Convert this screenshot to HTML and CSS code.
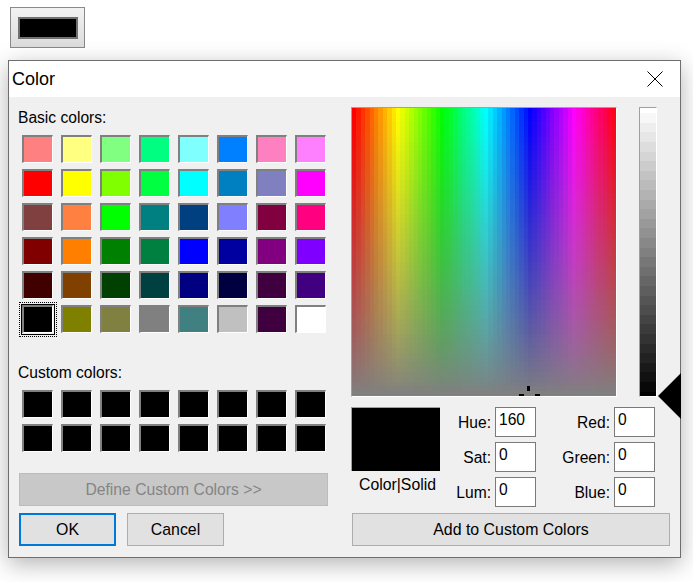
FILE: index.html
```html
<!DOCTYPE html>
<html lang="en">
<head>
    <meta charset="UTF-8">
    <meta name="viewport" content="width=device-width, initial-scale=1.0">
    <title>Color</title>
    <link rel="stylesheet" href="styles.css">
</head>
<body>

    <button class="color-button"><span class="color-button-fill"></span></button>

    <div class="dialog">
        <div class="title-bar">
            <span class="title">Color</span>
            <svg class="close-icon" width="16" height="16" viewBox="0 0 16 16">
                <path d="M0.5 0.5L15.5 15.5M15.5 0.5L0.5 15.5" stroke="#000" stroke-width="1" fill="none"/>
            </svg>
        </div>

        <div class="dialog-body">

            <!-- Left side: swatches and buttons -->
            <div class="left-column">
                <div class="group-label">Basic colors:</div>
                <div class="swatches" id="basic-colors"></div>

                <div class="group-label custom-label">Custom colors:</div>
                <div class="swatches" id="custom-colors"></div>

                <button class="win-button define-button">Define Custom Colors &gt;&gt;</button>
                <div class="button-row">
                    <button class="win-button ok-button">OK</button>
                    <button class="win-button cancel-button">Cancel</button>
                </div>
            </div>

            <!-- Right side: spectrum and values -->
            <div class="right-column">
                <div class="picker-row">
                    <div class="spectrum">
                        <canvas id="spectrum-canvas" width="264" height="288"></canvas>
                        <span class="cross cross-top"></span>
                        <span class="cross cross-left"></span>
                        <span class="cross cross-right"></span>
                    </div>
                    <div class="lum-bar">
                        <canvas id="lum-canvas" width="16" height="288"></canvas>
                    </div>
                    <svg class="lum-arrow" width="23" height="46" viewBox="0 0 23 46">
                        <polygon points="0,23 23,0 23,46" fill="#000"/>
                    </svg>
                </div>

                <div class="values-row">
                    <div class="preview-box">
                        <div class="preview"></div>
                        <div class="preview-label">Color|Solid</div>
                    </div>
                    <div class="fields">
                        <label>Hue:</label><div class="field">160</div>
                        <label>Red:</label><div class="field">0</div>
                        <label>Sat:</label><div class="field">0</div>
                        <label>Green:</label><div class="field">0</div>
                        <label>Lum:</label><div class="field">0</div>
                        <label>Blue:</label><div class="field">0</div>
                    </div>
                </div>

                <button class="win-button add-button">Add to Custom Colors</button>
            </div>

        </div>
    </div>

    <script src="script.js"></script>
</body>
</html>
```

FILE: styles.css
```css
html {
    height: 100%;
    background-color: #fff;
}

body {
    font-family: 'Liberation Sans', Arial, sans-serif;
    margin: 0;
    min-height: 582px;
    overflow: hidden;
    background-color: #fff;
    color: #000;
    font-size: 15.6px;
}

.color-button {
    display: block;
    box-sizing: border-box;
    width: 75px;
    height: 41px;
    margin: 7px 0 0 10px;
    padding: 0;
    border: 1px solid #8a8a8a;
    background: linear-gradient(#f2f2f2, #dcdcdc);
}

.color-button-fill {
    display: block;
    box-sizing: border-box;
    width: 60px;
    height: 22px;
    margin: 0 auto;
    background-color: #000;
    border: 2px solid #707070;
}

.dialog {
    box-sizing: border-box;
    width: 673px;
    height: 498px;
    margin: 12px 0 0 8px;
    background-color: #f0f0f0;
    border: 1px solid #6e6e6e;
    box-shadow: 0 6px 22px rgba(0, 0, 0, 0.3);
}

.title-bar {
    display: flex;
    align-items: center;
    justify-content: space-between;
    height: 36px;
    padding: 0 17px 0 3px;
    background-color: #fff;
}

.title {
    padding-top: 1px;
    font-size: 18px;
}

.close-icon {
    display: block;
}

.dialog-body {
    display: flex;
    gap: 23px;
    padding: 10px 0 0 9px;
}

.left-column {
    width: 310px;
}

.group-label {
    height: 28px;
    line-height: 22px;
}

.custom-label {
    margin-top: 27px;
    height: 30px;
    line-height: 26px;
}

.swatches {
    display: grid;
    grid-template-columns: repeat(8, 31px);
    column-gap: 8px;
    row-gap: 6px;
    margin-left: 4px;
}

.swatch {
    position: relative;
    box-sizing: border-box;
    height: 28px;
    border-style: solid;
    border-width: 2px 1px 1px 2px;
    border-color: #808080 #fff #fff #808080;
}

.swatch.selected::before {
    content: "";
    position: absolute;
    top: -3px;
    left: -3px;
    right: -3px;
    bottom: -3px;
    border: 1px solid #000;
}

.swatch.selected::after {
    content: "";
    position: absolute;
    top: -5px;
    left: -5px;
    right: -5px;
    bottom: -5px;
    border: 1px dotted #000;
}

.win-button {
    box-sizing: border-box;
    height: 33px;
    padding: 0;
    border: 1px solid #adadad;
    background-color: #e1e1e1;
    color: #000;
    font-family: inherit;
    font-size: 15.9px;
}

.define-button {
    display: block;
    width: 309px;
    margin: 21px 0 0 1px;
    background-color: #c8c8c8;
    border-color: #bcbcbc;
    color: #858585;
    font-size: 15.7px;
}

.button-row {
    display: flex;
    gap: 11px;
    margin: 7px 0 0 1px;
}

.ok-button,
.cancel-button {
    width: 97px;
}

.ok-button {
    border: 2px solid #0078d7;
}

.picker-row {
    display: flex;
    gap: 22px;
    position: relative;
}

.spectrum {
    position: relative;
    width: 264px;
    height: 288px;
    border-style: solid;
    border-width: 1px;
    border-color: #a0a0a0 #fff #fff #a0a0a0;
}

.spectrum canvas,
.lum-bar canvas {
    display: block;
}

.cross {
    position: absolute;
    background-color: #000;
}

.cross-top {
    left: 175px;
    top: 278px;
    width: 3px;
    height: 5px;
}

.cross-left {
    left: 167px;
    top: 286px;
    width: 5px;
    height: 2px;
}

.cross-right {
    left: 183px;
    top: 286px;
    width: 5px;
    height: 2px;
}

.lum-bar {
    width: 16px;
    height: 288px;
    border-style: solid;
    border-width: 1px;
    border-color: #a0a0a0 #fff #fff #a0a0a0;
}

.lum-arrow {
    position: absolute;
    left: 307px;
    top: 266px;
}

.values-row {
    display: flex;
    margin-top: 10px;
}

.preview-box {
    width: 89px;
}

.preview {
    box-sizing: border-box;
    height: 64px;
    background-color: #000;
    border-top: 1px solid #a0a0a0;
    border-left: 1px solid #a0a0a0;
}

.preview-label {
    margin-top: 5px;
    padding-left: 4px;
    font-size: 15.8px;
    line-height: 18px;
    text-align: center;
    white-space: nowrap;
}

.fields {
    display: grid;
    grid-template-columns: 51px 41px 70px 41px;
    grid-auto-rows: 30px;
    column-gap: 4px;
    row-gap: 5px;
}

.fields label {
    line-height: 31px;
    text-align: right;
}

.field {
    box-sizing: border-box;
    padding: 2px 0 0 3px;
    border: 1px solid #7a7a7a;
    background-color: #fff;
    line-height: 20px;
}

.add-button {
    display: block;
    width: 318px;
    margin: 6px 0 0 1px;
}
```

FILE: script.js
```js
const basicColors = [
    '#ff8080', '#ffff80', '#80ff80', '#00ff80', '#80ffff', '#0080ff', '#ff80c0', '#ff80ff',
    '#ff0000', '#ffff00', '#80ff00', '#00ff40', '#00ffff', '#0080c0', '#8080c0', '#ff00ff',
    '#804040', '#ff8040', '#00ff00', '#008080', '#004080', '#8080ff', '#800040', '#ff0080',
    '#800000', '#ff8000', '#008000', '#008040', '#0000ff', '#0000a0', '#800080', '#8000ff',
    '#400000', '#804000', '#004000', '#004040', '#000080', '#000040', '#400040', '#400080',
    '#000000', '#808000', '#808040', '#808080', '#408080', '#c0c0c0', '#400040', '#ffffff'
];

function addSwatches(containerId, colors) {
    const container = document.getElementById(containerId);
    colors.forEach(color => {
        const swatch = document.createElement('div');
        swatch.className = 'swatch';
        swatch.style.backgroundColor = color;
        container.appendChild(swatch);
    });
}

addSwatches('basic-colors', basicColors);
addSwatches('custom-colors', new Array(16).fill('#000000'));
document.querySelectorAll('#basic-colors .swatch')[40].classList.add('selected');

// Spectrum is 60 hue steps by 60 saturation steps
const spectrum = document.getElementById('spectrum-canvas').getContext('2d');
for (let col = 0; col < 60; col++) {
    for (let row = 0; row < 60; row++) {
        const x = Math.round(col * 4.4);
        const y = Math.round(row * 4.8);
        const w = Math.round((col + 1) * 4.4) - x;
        const h = Math.round((row + 1) * 4.8) - y;
        const sat = 100 * Math.pow(1 - row / 59, 0.85);
        spectrum.fillStyle = `hsl(${col * 6}, ${sat}%, 50%)`;
        spectrum.fillRect(x, y, w, h);
    }
}

// Luminance bar, half a step is cut off at the top and bottom
const lum = document.getElementById('lum-canvas').getContext('2d');
for (let y = 0; y < 288; y++) {
    const value = Math.round(255 * (1 - Math.floor((y + 4.8) / 9.6) / 30));
    lum.fillStyle = `rgb(${value}, ${value}, ${value})`;
    lum.fillRect(0, y, 16, 1);
}
```
